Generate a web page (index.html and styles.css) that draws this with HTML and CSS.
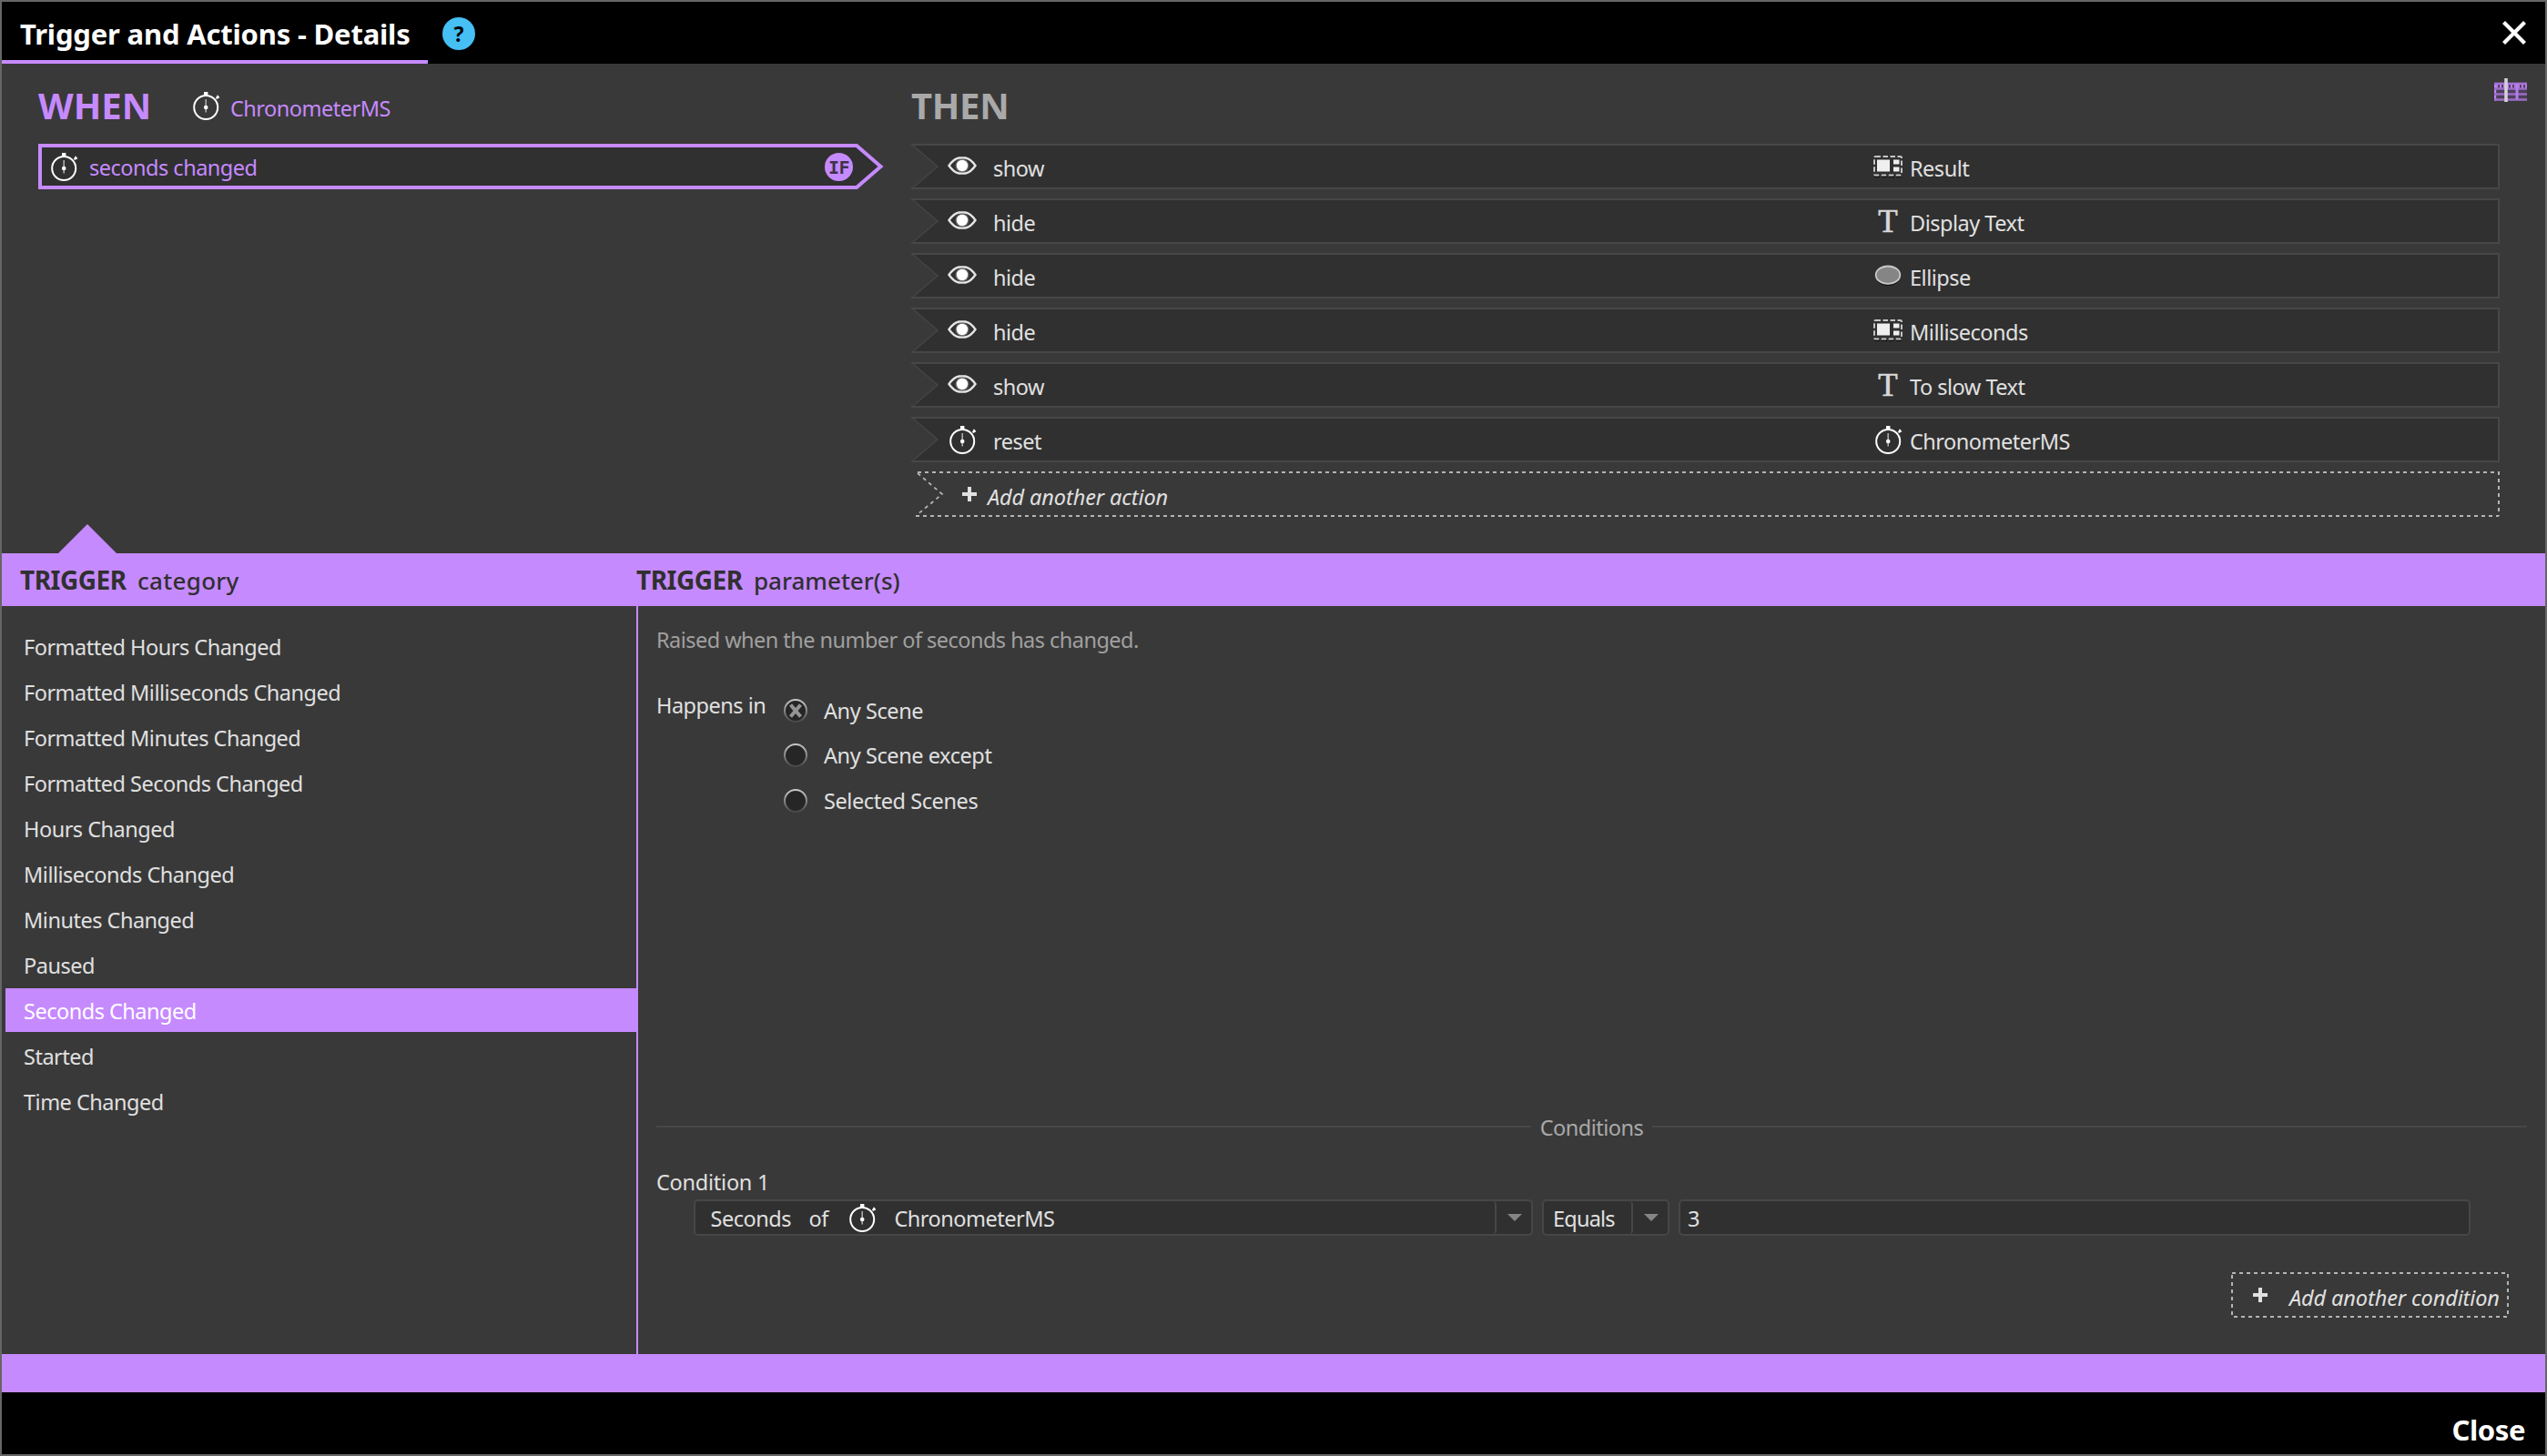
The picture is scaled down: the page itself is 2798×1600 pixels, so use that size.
FILE: index.html
```html
<!DOCTYPE html>
<html lang="en">
<head>
<meta charset="utf-8">
<title>Trigger and Actions - Details</title>
<link rel="stylesheet" href="styles.css">
</head>
<body>
<svg class="defs" width="0" height="0" aria-hidden="true">
  <symbol id="stopwatch" viewBox="0 0 30 31">
    <circle cx="14.2" cy="17" r="13" fill="none" stroke="#fff" stroke-width="2"/>
    <path d="M12 0h4.4v4.5H12zM25 6.4 27 3.2 29.4 6.2 26 8z" fill="#fff"/>
    <path d="M14.2 8v14.5" stroke="#aaa" stroke-width="1.6"/>
    <circle cx="14.2" cy="17" r="2.3" fill="#fff"/>
  </symbol>
  <symbol id="eye" viewBox="0 0 32 20">
    <path d="M1.5 10C5 5 9.500 2 12.500 1.500h7C23 2 27 5 30.500 10 27 15 23 18 19.500 18.500h-7C9.500 18 5 15 1.500 10z" fill="#303030" stroke="#e4e4e4" stroke-width="2.400"/>
    <circle cx="16" cy="10" r="7.600" fill="#666"/>
    <circle cx="16" cy="10" r="6.200" fill="#fff"/>
  </symbol>
  <symbol id="group" viewBox="0 0 32 25">
    <path d="M1 24.200h30" stroke="#111" stroke-width="1.600" stroke-dasharray="6 2"/>
    <rect x="1" y="2" width="30" height="20.500" rx="1.500" fill="none" stroke="#c4c4c4" stroke-width="2" stroke-dasharray="5.500 2.500"/>
    <path d="M4 5.500h14v13H4zM22 5.500h6.500v5H22zM22 13.500h6.500v5H22z" fill="#efefef"/>
  </symbol>
  <symbol id="oval" viewBox="0 0 32 24">
    <ellipse cx="16" cy="12.500" rx="13.500" ry="10.500" fill="#151515"/>
    <ellipse cx="16" cy="11.200" rx="13.300" ry="9.700" fill="#858585" stroke="#c8c8c8" stroke-width="1.800"/>
  </symbol>
  <symbol id="plus" viewBox="0 0 16 16">
    <path d="M6 0h4v6h6v4h-6v6H6v-6H0V6h6z" fill="#e0e0e0"/>
  </symbol>
  <symbol id="row-shape" viewBox="0 0 1745 50">
    <path d="M1 1H1744V49H1L29 25Z" fill="#303030"/>
    <path d="M1 1 29 25 1 49" fill="none" stroke="#444" stroke-width="1.600"/>
    <path d="M0 1H1744V49H0" fill="none" stroke="#474747" stroke-width="2"/>
  </symbol>
  <linearGradient id="ring" x1="0" y1="0" x2="0" y2="1">
    <stop offset="0" stop-color="#c8c8c8"/><stop offset="1" stop-color="#484848"/>
  </linearGradient>
  <symbol id="radio" viewBox="0 0 26 26">
    <circle cx="13" cy="13" r="12" fill="#262626" stroke="url(#ring)" stroke-width="2"/>
  </symbol>
</svg>

<div class="window">
  <header class="titlebar">
    <h1 class="title">Trigger and Actions - Details</h1>
    <span class="help">?</span>
    <svg class="dismiss" width="28" height="28" viewBox="0 0 28 28"><path d="M2.500 2.500 25.500 25.500M25.500 2.500 2.500 25.500" stroke="#fff" stroke-width="4.200"/></svg>
  </header>

  <section class="rules">
    <div class="when">
      <div class="heading">
        <h2 class="when-title">WHEN</h2>
        <svg class="watch" width="30" height="31"><use href="#stopwatch"/></svg>
        <span class="source">ChronometerMS</span>
      </div>
      <div class="trigger">
        <svg class="shape" width="930" height="50"><path d="M2 2H899L925.500 25 899 48H2Z" fill="#303030" stroke="#c68aff" stroke-width="4"/></svg>
        <svg class="watch" width="30" height="31"><use href="#stopwatch"/></svg>
        <span class="trigger-name">seconds changed</span>
        <span class="if-badge">IF</span>
      </div>
    </div>
    <div class="then">
      <div class="heading">
        <h2 class="then-title">THEN</h2>
        <svg class="timeline" width="36" height="28" viewBox="0 0 36 28">
          <path d="M0 4h36v21H0z" fill="#4c3f59"/>
          <path d="M1 5v20" stroke="#c083f8" stroke-width="2.400"/>
          <path d="M0 6h36" stroke="#a572d6" stroke-width="2.400"/>
          <path d="M2 9h34" stroke="#b47de8" stroke-width="4" stroke-dasharray="2 2"/>
          <path d="M0 11.500h36M0 17.500h36M0 23.500h36" stroke="#9a6cc6" stroke-width="2.400"/>
          <path d="M25 6v17" stroke="#b47de8" stroke-width="3"/>
          <path d="M13 0v26" stroke="#d4cedb" stroke-width="3.600"/>
        </svg>
      </div>
      <div class="actions">
        <div class="action"><svg class="shape" width="1745" height="50"><use href="#row-shape"/></svg><svg class="eye" width="32" height="20"><use href="#eye"/></svg><span class="verb">show</span><svg class="icon group" width="32" height="25"><use href="#group"/></svg><span class="target">Result</span></div>
        <div class="action"><svg class="shape" width="1745" height="50"><use href="#row-shape"/></svg><svg class="eye" width="32" height="20"><use href="#eye"/></svg><span class="verb">hide</span><span class="icon letter">T</span><span class="target">Display Text</span></div>
        <div class="action"><svg class="shape" width="1745" height="50"><use href="#row-shape"/></svg><svg class="eye" width="32" height="20"><use href="#eye"/></svg><span class="verb">hide</span><svg class="icon oval" width="32" height="24"><use href="#oval"/></svg><span class="target">Ellipse</span></div>
        <div class="action"><svg class="shape" width="1745" height="50"><use href="#row-shape"/></svg><svg class="eye" width="32" height="20"><use href="#eye"/></svg><span class="verb">hide</span><svg class="icon group" width="32" height="25"><use href="#group"/></svg><span class="target">Milliseconds</span></div>
        <div class="action"><svg class="shape" width="1745" height="50"><use href="#row-shape"/></svg><svg class="eye" width="32" height="20"><use href="#eye"/></svg><span class="verb">show</span><span class="icon letter">T</span><span class="target">To slow Text</span></div>
        <div class="action"><svg class="shape" width="1745" height="50"><use href="#row-shape"/></svg><svg class="watch" width="30" height="31"><use href="#stopwatch"/></svg><span class="verb">reset</span><svg class="icon watch" width="30" height="31"><use href="#stopwatch"/></svg><span class="target">ChronometerMS</span></div>
        <div class="add-action">
          <svg class="shape" width="1745" height="50" fill="none" stroke="#b4b4b4" stroke-width="2"><path d="M7 1H1744V49" stroke-dasharray="4 4"/><path d="M5 49H1744" stroke-dasharray="4 4"/><path d="M7 2 34 25 6 48" stroke-width="1.800" stroke-dasharray="4 4"/></svg>
          <svg class="plus" width="16" height="16"><use href="#plus"/></svg>
          <span class="add-label">Add another action</span>
        </div>
      </div>
    </div>
  </section>

  <div class="band">
    <svg class="pointer" width="64" height="32" viewBox="0 0 64 32"><path d="M0 32 32 0 64 32z" fill="#c68aff"/></svg>
    <div class="band-cell category-cell"><b>TRIGGER</b><span class="category">category</span></div>
    <div class="band-cell"><b>TRIGGER</b><span class="parameters">parameter(s)</span></div>
  </div>

  <main class="details">
    <ul class="categories">
      <li>Formatted Hours Changed</li>
      <li>Formatted Milliseconds Changed</li>
      <li>Formatted Minutes Changed</li>
      <li>Formatted Seconds Changed</li>
      <li>Hours Changed</li>
      <li>Milliseconds Changed</li>
      <li>Minutes Changed</li>
      <li>Paused</li>
      <li class="selected">Seconds Changed</li>
      <li>Started</li>
      <li>Time Changed</li>
    </ul>
    <section class="panel">
      <p class="description">Raised when the number of seconds has changed.</p>
      <div class="happens">
        <span class="happens-label">Happens in</span>
        <div class="options">
          <div class="option"><svg width="26" height="26"><use href="#radio"/><path d="M7.500 6.500 18.500 19.500M18.500 6.500 7.500 19.500" stroke="#959595" stroke-width="4"/></svg>Any Scene</div>
          <div class="option"><svg width="26" height="26"><use href="#radio"/></svg>Any Scene except</div>
          <div class="option"><svg width="26" height="26"><use href="#radio"/></svg>Selected Scenes</div>
        </div>
      </div>
      <div class="conditions">
        <div class="divider">Conditions</div>
        <div class="condition-name">Condition 1</div>
        <div class="fields">
          <div class="combo subject">
            <div class="value"><span class="property">Seconds</span><span class="of">of</span><svg class="watch" width="30" height="31"><use href="#stopwatch"/></svg><span>ChronometerMS</span></div>
            <div class="arrow"></div>
          </div>
          <div class="combo operator">
            <div class="value">Equals</div>
            <div class="arrow"></div>
          </div>
          <div class="combo operand">3</div>
        </div>
        <div class="add-condition">
          <svg class="dashes" width="305" height="50" fill="none" stroke="#b4b4b4" stroke-width="2"><rect x="1" y="1" width="303" height="48" stroke-dasharray="4 4"/></svg>
          <svg class="plus" width="16" height="16"><use href="#plus"/></svg>
          <span class="add-label">Add another condition</span>
        </div>
      </div>
    </section>
  </main>

  <div class="strip"></div>
  <footer class="footer"><span class="close">Close</span></footer>
</div>
</body>
</html>
```
FILE: styles.css
```css
* { box-sizing: border-box; }

body {
  margin: 0;
  background: #393939;
  color: #e0e0e0;
  font-family: "Noto Sans", "Open Sans", sans-serif;
  font-size: 23.5px;
  letter-spacing: -0.5px;
  white-space: nowrap;
}

h1, h2, p, ul { margin: 0; padding: 0; list-style: none; }
svg { display: block; flex: none; }
.defs { position: absolute; }

.window {
  display: flex;
  flex-direction: column;
  width: 2798px;
  height: 1600px;
  border: 2px solid #666;
}

/* Title bar */
.titlebar {
  display: flex;
  height: 68px;
  background: #000;
}
.title {
  width: 468px;
  padding: 6px 0 0 20px;
  border-bottom: 4px solid #c68aff;
  color: #fff;
  font-size: 31px;
  font-weight: 700;
  line-height: 58px;
  letter-spacing: -0.19px;
}
.help {
  width: 36px;
  height: 36px;
  margin: 17px 0 0 16px;
  border-radius: 50%;
  background: #46bff5;
  color: #000;
  font-size: 23px;
  font-weight: 700;
  line-height: 37px;
  text-align: center;
  letter-spacing: 0;
}
.dismiss { margin: 20px 20px 0 auto; }

/* When / then rules */
.rules {
  display: flex;
  height: 538px;
}
.when { width: 999px; padding-left: 40px; }
.then { flex: 1; }
.heading {
  display: flex;
  height: 88px;
}
.when-title, .then-title {
  font-size: 40px;
  font-weight: 700;
  line-height: 91px;
}
.when-title { width: 170px; color: #c68aff; letter-spacing: 0; }
.then-title { color: #a9a9a9; letter-spacing: -0.3px; }
.heading .watch { margin-top: 31px; }
.source { margin-left: 11px; color: #c68aff; line-height: 99px; }
.timeline { margin: 16px 20px 0 auto; }

.shape { position: absolute; left: 0; top: 0; }
.trigger {
  position: relative;
  display: flex;
  width: 930px;
  height: 50px;
  padding-left: 14px;
}
.trigger > * { position: relative; }
.trigger > .shape, .action > .shape { position: absolute; }
.trigger .watch { margin-top: 10px; }
.trigger-name { margin-left: 12px; color: #c68aff; line-height: 53px; }
.if-badge {
  width: 31px;
  height: 31px;
  margin: 10px 35px 0 auto;
  border-radius: 50%;
  background: #c68aff;
  color: #3d3448;
  font: 700 20px/32px "DejaVu Sans Mono", monospace;
  letter-spacing: -0.5px;
  text-align: center;
}

.actions { display: flex; flex-direction: column; gap: 10px; }
.action {
  position: relative;
  display: grid;
  grid-template-columns: 32px 18px 967px 32px 8px auto;
  width: 1745px;
  height: 50px;
  padding-left: 40px;
  line-height: 55px;
}
.action > * { position: relative; }
.eye { grid-column: 1; margin-top: 14px; }
.action > .watch { grid-column: 1; margin: 10px 0 0 2px; }
.verb { grid-column: 3; }
.action > .icon { grid-column: 4; }
.icon.group { margin-top: 12px; }
.icon.oval { margin-top: 13px; }
.icon.letter {
  color: #d8d8d8;
  font: 35px/52px "Liberation Serif", serif;
  -webkit-text-stroke: 0.7px #d8d8d8;
  letter-spacing: 0;
  text-align: center;
}
.target { grid-column: 6; }

.add-action {
  position: relative;
  display: flex;
  width: 1745px;
  height: 50px;
  padding-left: 56px;
}
.add-action .plus { margin: 17px 12px 0 0; }
.add-label { font-style: italic; line-height: 57px; letter-spacing: -0.11px; }

/* Category and parameter band */
.band {
  position: relative;
  display: flex;
  height: 58px;
  background: #c68aff;
  color: #303030;
}
.pointer { position: absolute; left: 62px; top: -32px; }
.band-cell {
  display: flex;
  align-items: baseline;
  line-height: 58px;
}
.category-cell { width: 697px; padding-left: 20px; }
.band b { width: 129px; font-size: 28px; letter-spacing: -0.5px; }
.category, .parameters { font-size: 26px; font-weight: 500; }
.category { letter-spacing: 0.3px; }
.parameters { letter-spacing: 0; }

.details { display: flex; height: 822px; }
.categories {
  display: flex;
  flex-direction: column;
  gap: 2px;
  width: 697px;
  padding: 20px 0 0 4px;
}
.categories li { height: 48px; padding-left: 20px; line-height: 50px; }
.categories .selected { background: #c68aff; color: #fff; }

.panel {
  display: flex;
  flex: 1;
  flex-direction: column;
  padding: 17px 20px 40px 20px;
  border-left: 2px solid #c68aff;
}
.description { color: #a0a0a0; line-height: 40px; letter-spacing: -0.54px; }
.happens { display: flex; margin-top: 32px; }
.happens-label { width: 140px; line-height: 40px; }
.options { padding-top: 1px; }
.option {
  display: flex;
  align-items: center;
  gap: 18px;
  height: 49.5px;
  letter-spacing: -0.42px;
}

.conditions { display: flex; flex-direction: column; margin-top: auto; }
.divider {
  display: flex;
  align-items: center;
  gap: 10px;
  height: 40px;
  color: #a9a9a9;
}
.divider::before, .divider::after {
  content: "";
  flex: 1;
  height: 2px;
  margin-top: -2px;
  background: #474747;
}
.condition-name { margin-top: 19px; line-height: 42px; height: 40px; letter-spacing: -0.25px; }
.fields { display: flex; gap: 10px; margin-left: 40.5px; }
.combo {
  display: flex;
  height: 40px;
  border: 2px solid #474747;
  border-radius: 5px;
  background: #303030;
  line-height: 38px;
}
.subject { width: 922.5px; }
.operator { width: 140px; }
.operand { width: 870px; padding-left: 8px; }
.value {
  display: flex;
  flex: 1;
  padding-left: 17px;
  border-right: 2px solid #474747;
  border-radius: 0 4px 4px 0;
}
.operator .value { padding-left: 10px; letter-spacing: -0.8px; }
.property { width: 108px; }
.of { width: 44px; }
.value .watch { margin: 3px 20px 0 0; }
.arrow {
  width: 38px;
  background: #858585;
  clip-path: polygon(12px 14px, 28px 14px, 20px 22px);
}

.add-condition {
  position: relative;
  display: flex;
  align-self: flex-end;
  width: 305px;
  height: 50px;
  margin: 40px 20px 0 0;
  padding-left: 24px;
}
.dashes { position: absolute; left: 0; top: 0; }
.add-condition .plus { margin: 17px 24px 0 0; }

.strip { height: 42px; background: #c68aff; }
.footer {
  display: flex;
  justify-content: flex-end;
  height: 68px;
  padding: 6px 22px 0 0;
  background: #000;
}
.close {
  color: #fff;
  font-size: 31px;
  font-weight: 700;
  line-height: 71px;
  letter-spacing: -0.4px;
}
```
